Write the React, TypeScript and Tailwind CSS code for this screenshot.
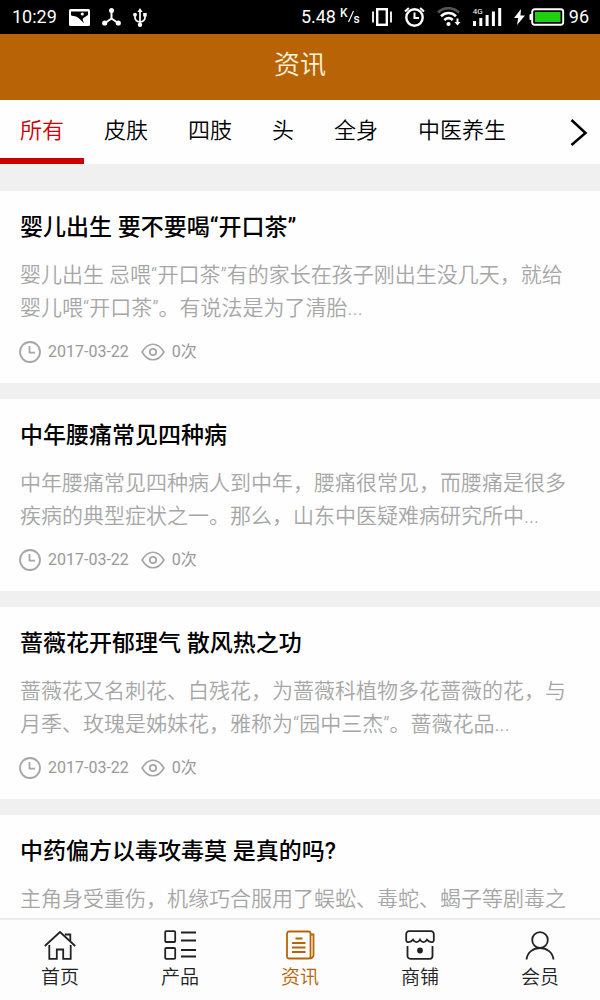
import React, { useState } from 'react';

interface Article {
  id: number;
  title: string;
  summary: string;
  date?: string;
  views?: number;
}

const categories = ['所有', '皮肤', '四肢', '头', '全身', '中医养生'];

const articles: Article[] = [
  {
    id: 1,
    title: '婴儿出生 要不要喝“开口茶”',
    summary: '婴儿出生 忌喂“开口茶”有的家长在孩子刚出生没几天，就给婴儿喂“开口茶”。有说法是为了清胎...',
    date: '2017-03-22',
    views: 0,
  },
  {
    id: 2,
    title: '中年腰痛常见四种病',
    summary: '中年腰痛常见四种病人到中年，腰痛很常见，而腰痛是很多疾病的典型症状之一。那么，山东中医疑难病研究所中...',
    date: '2017-03-22',
    views: 0,
  },
  {
    id: 3,
    title: '蔷薇花开郁理气 散风热之功',
    summary: '蔷薇花又名刺花、白残花，为蔷薇科植物多花蔷薇的花，与月季、玫瑰是姊妹花，雅称为“园中三杰”。蔷薇花品...',
    date: '2017-03-22',
    views: 0,
  },
  {
    id: 4,
    title: '中药偏方以毒攻毒莫 是真的吗?',
    summary: '主角身受重伤，机缘巧合服用了蜈蚣、毒蛇、蝎子等剧毒之',
  },
];

const StatusBar: React.FC = () => (
  <div className="h-[34px] shrink-0 bg-black text-white text-lg leading-none flex items-center justify-between pl-3 pr-[11px]">
    <div className="flex items-center gap-3">
      <span>10:29</span>
      <svg width="21" height="17" viewBox="0 0 21 17">
        <rect width="21" height="17" rx="1.5" fill="#fff" />
        <path d="M2 2.500h17v3.500c-1.500 1.200-3.800 2.200-5 3.500-.8 1 .2 2.700 1.200 4.700C12.500 12 10.500 9 7.500 7.700 5.500 6.800 3.500 7 2 6.300z" fill="#000" />
        <circle cx="13.300" cy="5" r="1.600" fill="#fff" />
      </svg>
      <svg width="19" height="18" viewBox="0 0 19 18" fill="#fff">
        <path d="M9.500 3v7.500L3 15M9.500 10.500L16 15" fill="none" stroke="#fff" strokeWidth="2" />
        <circle cx="9.500" cy="2.600" r="2.500" />
        <circle cx="2.700" cy="15" r="2.600" />
        <circle cx="16.300" cy="15" r="2.600" />
      </svg>
      <svg width="14" height="19" viewBox="0 0 14 19" fill="#fff">
        <path d="M7 3v13M2 7v2.500c0 3 2 4 5 4.500M12 7v2.500c0 3-2 4-5 4.500" fill="none" stroke="#fff" strokeWidth="1.700" />
        <path d="M7 0l2.600 4H4.400z" />
        <rect x="10.200" y="5" width="3.500" height="3.500" />
        <circle cx="2" cy="6.700" r="1.900" />
        <circle cx="7" cy="16.800" r="2.200" />
      </svg>
    </div>
    <div className="flex items-center gap-3">
      <div className="flex items-center gap-1">
        <span>5.48</span>
        <span className="flex items-center text-xs leading-none font-medium">
          <span className="pb-2">K</span>
          <svg width="6" height="14" viewBox="0 0 6 14">
            <path d="M5.500 1L.5 12" stroke="#fff" strokeWidth="1.200" />
          </svg>
          <span className="pt-1">s</span>
        </span>
      </div>
      <svg width="20" height="18" viewBox="0 0 20 18" fill="none" stroke="#fff">
        <rect x="5.200" y="1.200" width="9.600" height="15.600" strokeWidth="2.400" />
        <path d="M1 3.500v11M19 3.500v11" strokeWidth="1.800" />
      </svg>
      <svg width="21" height="20" viewBox="0 0 21 20" fill="none" stroke="#fff">
        <circle cx="10.500" cy="10.500" r="8.200" strokeWidth="2.400" />
        <path d="M10.500 5.500v5.500h4.500" strokeWidth="2" />
        <path d="M1 4.500L4.800 1M20 4.500L16.200 1" strokeWidth="2" />
      </svg>
      <svg width="24" height="20" viewBox="0 0 24 20" fill="none">
        <path d="M1 5.500C7-.3 16-.3 22 5.500" stroke="#555" strokeWidth="2.600" />
        <path d="M4 9.200c4.500-4.200 10.500-4.200 15 0M7.300 13c2.800-2.400 5.800-2.400 8.500 0" stroke="#fff" strokeWidth="2.600" />
        <circle cx="11.500" cy="17" r="2.100" fill="#fff" />
        <path d="M20.500 11.500v4" stroke="#fff" strokeWidth="2" />
        <path d="M17.500 15h6l-3 3.500z" fill="#fff" />
      </svg>
      <div className="relative">
        <svg width="29" height="18" viewBox="0 0 29 18" fill="#fff">
          <rect x="0" y="13" width="3" height="5" />
          <rect x="6.300" y="10" width="3" height="8" />
          <rect x="12.600" y="7" width="3" height="11" />
          <rect x="18.900" y="3.500" width="3" height="14.500" />
          <rect x="25.200" y="0" width="3" height="18" />
        </svg>
        <span className="absolute left-0 top-0 text-[8px] leading-none">4G</span>
      </div>
      <div className="flex items-center gap-1">
        <svg width="11" height="16" viewBox="0 0 11 16" fill="#fff">
          <path d="M7 0L0 9h4.200L3 16l8-9.500H6.500z" />
        </svg>
        <svg width="36" height="18" viewBox="1 0 36 18">
          <rect x="4.200" y="1.200" width="31" height="15.600" rx="2.500" fill="none" stroke="#fff" strokeWidth="1.900" />
          <rect x="1.500" y="6" width="2.500" height="6" rx="1" fill="#fff" />
          <rect x="7" y="4" width="25.500" height="10" fill="#1fd010" />
        </svg>
        <span>96</span>
      </div>
    </div>
  </div>
);

const ClockIcon = () => (
  <svg width="22" height="22" viewBox="0 0 22 22" fill="none" stroke="#a6a6a6">
    <circle cx="11" cy="11" r="10" strokeWidth="1.800" />
    <path d="M10.500 5v6.700h5.500" strokeWidth="1.800" />
  </svg>
);

const EyeIcon = () => (
  <svg width="24" height="18" viewBox="0 0 24 18" fill="none" stroke="#a6a6a6">
    <path d="M1 9C4 4 7.500 1.200 12 1.200S20 4 23 9c-3 5-6.500 7.800-11 7.800S4 14 1 9z" strokeWidth="1.600" strokeLinejoin="round" />
    <circle cx="12" cy="9" r="3.200" strokeWidth="1.800" />
  </svg>
);

const ArticleCard: React.FC<{ article: Article }> = ({ article }) => (
  <article className="bg-[#fefefe] px-5 pt-[22px] pb-[19px]">
    <h2 className="text-[23px] leading-[30px] font-medium text-black">
      <a href="#article">{article.title}</a>
    </h2>
    <p className="mt-4 text-[21px] leading-[33px] font-[350] text-[#a6a6a6]">{article.summary}</p>
    {article.date && (
      <div className="mt-[15px] -ml-px h-6 flex items-center text-base text-[#999]">
        <ClockIcon />
        <span className="ml-[7px]">{article.date}</span>
        <span className="ml-3 mr-[7px]">
          <EyeIcon />
        </span>
        <span>{article.views}次</span>
      </div>
    )}
  </article>
);

const tabs = [
  {
    label: '首页',
    icon: (
      <>
        <path d="M.8 16L16 2l15.200 14" />
        <path d="M20.800 4.500h5.500v6.500" />
        <path d="M5.300 15v13.800h7.500v-9.300h6.400v9.300h7.500V15" />
      </>
    ),
  },
  {
    label: '产品',
    icon: (
      <>
        <rect x="1.200" y="1.200" width="10" height="10.800" rx="1" />
        <rect x="1.200" y="18" width="10" height="10.800" rx="1" />
        <path d="M17 2.500h15M17 10.500h15M17 20h15M17 26.500h15" />
      </>
    ),
  },
  {
    label: '资讯',
    icon: (
      <>
        <rect x="3" y="1.500" width="23.500" height="27" rx="2" />
        <path d="M26.500 4.500h3v20.500a3.500 3.500 0 0 1-3.500 3.500" />
        <path d="M11.500 8.500h7M8 13h13.500M8 17.500h13.500M8 22h13.500" strokeWidth="2" />
      </>
    ),
  },
  {
    label: '商铺',
    icon: (
      <>
        <path d="M2.200 10.500V4a2.800 2.800 0 0 1 2.800-2.800h22A2.800 2.800 0 0 1 29.800 4v6.500c0 2-4.200 2.400-6.900-.8-1.800 3.200-5.200 3.200-6.900 0-1.700 3.200-5.100 3.200-6.900 0-2.700 3.200-6.900 2.800-6.900.8z" />
        <path d="M3.500 16v10a2.800 2.800 0 0 0 2.800 2.800h19.400a2.800 2.800 0 0 0 2.800-2.800V16" />
        <circle cx="16" cy="20.500" r="2" fill="currentColor" />
      </>
    ),
  },
  {
    label: '会员',
    icon: (
      <>
        <circle cx="16" cy="10" r="7.800" />
        <path d="M2.500 29.500c.8-7 6.500-11.500 13.500-11.500s12.700 4.500 13.500 11.500" />
      </>
    ),
  },
];

const App: React.FC = () => {
  const [category, setCategory] = useState('所有');
  const [activeTab, setActiveTab] = useState('资讯');

  return (
    <div className="h-screen flex flex-col overflow-hidden bg-[#f0f0f0] font-[Roboto,'Noto_Sans_CJK_SC',sans-serif]">
      <StatusBar />

      <header className="h-[66px] shrink-0 bg-[#b86406] flex items-center justify-center pb-1">
        <h1 className="text-[26px] leading-8 font-[350] text-[#fff3d8]">资讯</h1>
      </header>

      {/* Category tabs */}
      <div className="h-16 shrink-0 bg-[#fefefe] flex items-stretch justify-between">
        <div className="flex">
          {categories.map((name) => (
            <button
              key={name}
              onClick={() => setCategory(name)}
              className={`px-5 pt-1 text-[22px] leading-8 font-[350] border-b-6 whitespace-nowrap ${
                category === name ? 'text-[#cc0000] border-[#cc0000]' : 'text-black border-transparent'
              }`}
            >
              {name}
            </button>
          ))}
        </div>
        <button aria-label="更多分类" className="px-3">
          <svg width="18" height="28" viewBox="0 0 18 28" fill="none" stroke="#000" strokeWidth="2.500">
            <path d="M1.500 2L15.500 15 1.500 27" />
          </svg>
        </button>
      </div>

      {/* Article list */}
      <main className="flex-1 min-h-0 overflow-hidden pt-[27px] flex flex-col gap-4">
        {articles.map((article) => (
          <ArticleCard key={article.id} article={article} />
        ))}
      </main>

      <nav className="h-[82px] shrink-0 bg-[#fdfdfd] border-t-2 border-[#ebebeb] grid grid-cols-5">
        {tabs.map((tab) => (
          <a
            key={tab.label}
            href="#tab"
            onClick={() => setActiveTab(tab.label)}
            className={`flex flex-col items-center pt-[10px] gap-[6px] ${
              activeTab === tab.label ? 'text-[#b86406]' : 'text-[#222]'
            }`}
          >
            <svg width="32" height="30" viewBox="0 0 32 30" fill="none" stroke="currentColor" strokeWidth="1.800">
              {tab.icon}
            </svg>
            <span className="text-[19px] leading-6 font-[350]">{tab.label}</span>
          </a>
        ))}
      </nav>
    </div>
  );
};

export default App;
